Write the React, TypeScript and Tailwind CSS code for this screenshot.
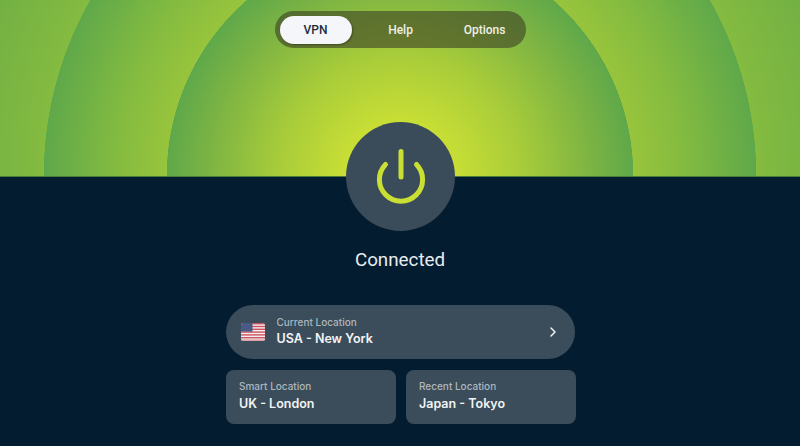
import React from "react";
import { ChevronRight } from "lucide-react";

function Flag() {
  const stripes = [0, 2, 4, 6, 8, 10, 12];
  return (
    <svg width="24" height="18" viewBox="0 0 24 18" className="shrink-0">
      <defs>
        <clipPath id="flagclip"><rect x="0" y="0" width="24" height="18" rx="2.5" /></clipPath>
      </defs>
      <g clipPath="url(#flagclip)">
        <rect width="24" height="18" fill="#f1eef0" />
        {stripes.map((i) => (
          <rect key={i} x="0" y={i * 1.4} width="24" height="1.4" fill="#d0525f" />
        ))}
        <rect y="16.6" width="24" height="1.4" fill="#d9a0a8" />
        <rect x="0" y="0" width="11.5" height="8.6" fill="#4a5a85" />
      </g>
    </svg>
  );
}

function PowerIcon() {
  return (
    <svg width="60" height="60" viewBox="0 0 60 60" fill="none" stroke="#c9df34" strokeWidth="5" strokeLinecap="round" className="ml-[1px]">
      <path d="M30 4.5V30" />
      <path d="M14.5 17.5A21.6 21.6 0 1 0 45.5 17.5" />
    </svg>
  );
}

function SmallCard({ label, value }: { label: string; value: string }) {
  return (
    <div className="flex-1 h-[54px] rounded-lg bg-[#3b4d5a] pl-[13.5px] pb-[2px] flex flex-col justify-center">
      <div className="text-[10px] leading-[14px] font-medium text-[#aeb7be]">{label}</div>
      <div className="mt-[1px] text-[12.5px] leading-[19px] font-semibold text-[#f1f3f5]">{value}</div>
    </div>
  );
}

export default function App() {
  return (
    <div className="w-[800px] h-[446px] overflow-hidden flex flex-col bg-[#041c30] font-['Roboto',sans-serif]">
      <header className="h-[177px] shrink-0 pt-[11px] flex justify-center bg-[radial-gradient(circle_at_50%_100%,#cbe035_0px,#c8de35_55px,#a6cb3a_125px,#7db443_190px,#5fa84a_233px,#98c43c_233.5px,#83bb40_285px,#5fa84a_356px,#84bb40_356.5px,#70af45_450px)] border-b border-[#4a7a38]">
        <nav className="w-[251px] h-[37px] rounded-full bg-[#3c3f24]/60 flex items-center pl-[5px] text-[12px] font-medium">
          <div className="w-[72px] h-[28px] rounded-full bg-[#f5f6f9] text-[#1c2c3f] flex items-center justify-center shadow-[1px_1px_2px_rgba(0,0,0,0.35)]">VPN</div>
          <div className="w-[98px] text-center text-[#eef0e6]">Help</div>
          <div className="w-[70px] text-center text-[#eef0e6]">Options</div>
        </nav>
      </header>
      <main className="flex flex-col items-center">
        <div className="relative z-10 -mt-[55px] w-[109px] h-[109px] rounded-full bg-[#3a4c5a] flex items-center justify-center">
          <PowerIcon />
        </div>
        <div className="mt-[15px] h-[28px] text-[18.8px] leading-[28px] text-[#e8ecef]">Connected</div>
        <div className="mt-[31px] ml-[1px] w-[350px] flex flex-col gap-[11px] font-['Inter',sans-serif]">
          <div className="mr-[1px] h-[54px] rounded-full bg-[#3b4d5a] flex items-center pl-[15px] pr-[14px]">
            <Flag />
            <div className="ml-[12px] pb-[2px] flex-1">
              <div className="text-[10px] leading-[14px] font-medium text-[#aeb7be]">Current Location</div>
              <div className="text-[12.5px] leading-[19px] font-semibold text-[#f1f3f5]">USA - New York</div>
            </div>
            <ChevronRight size={16} strokeWidth={2.25} className="text-[#f1f3f5]" />
          </div>
          <div className="flex gap-[10px]">
            <SmallCard label="Smart Location" value="UK - London" />
            <SmallCard label="Recent Location" value="Japan - Tokyo" />
          </div>
        </div>
      </main>
    </div>
  );
}
